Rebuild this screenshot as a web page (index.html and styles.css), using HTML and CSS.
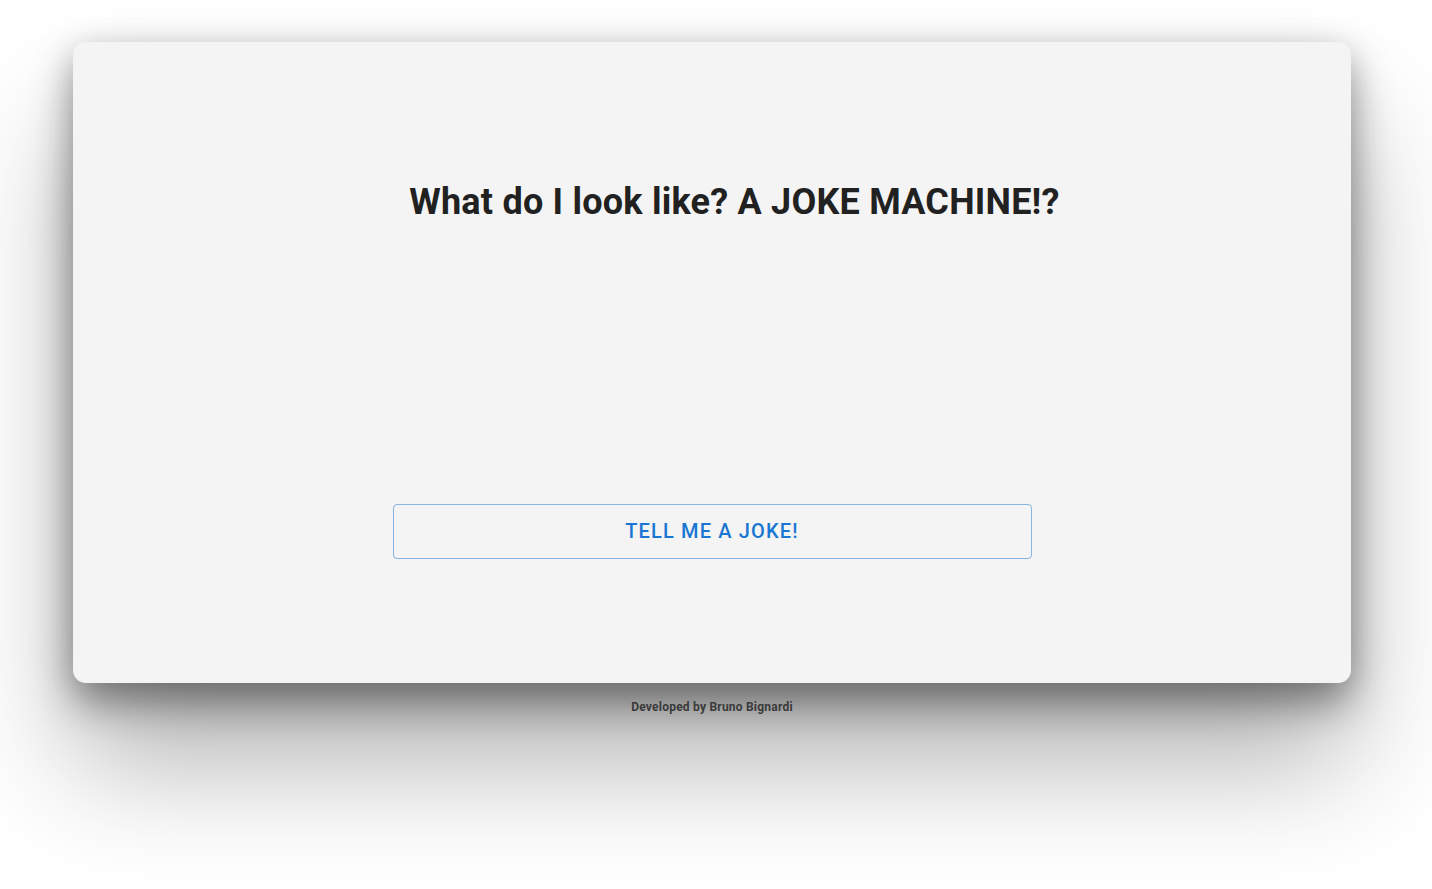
FILE: index.html
```html
<!DOCTYPE html>
<html lang="en">
<head>
<meta charset="utf-8">
<title>Joke Machine</title>
<link rel="stylesheet" href="styles.css">
</head>
<body>
<div class="page">
  <main class="card">
    <h1 class="title">What do I look like? A JOKE MACHINE!?</h1>
    <div class="joke"></div>
    <button class="joke-btn" type="button">TELL ME A JOKE!</button>
  </main>
  <footer class="credit">Developed by Bruno Bignardi</footer>
</div>
</body>
</html>
```

FILE: styles.css
```css
html, body {
  margin: 0;
  padding: 0;
  background: #ffffff;
  font-family: Roboto, "Noto Sans", Arial, sans-serif;
}

.page {
  min-height: 100vh;
  box-sizing: border-box;
  padding: 42px 81px 0 73px;
  display: flex;
  flex-direction: column;
  align-items: stretch;
}

.card {
  height: 641px;
  flex-shrink: 0;
  box-sizing: border-box;
  background: #f4f4f4;
  border-radius: 13px;
  box-shadow: 0 20px 40px rgba(0, 0, 0, 0.4),
              0 80px 120px rgba(0, 0, 0, 0.3),
              0 0 30px rgba(0, 0, 0, 0.08);
  display: flex;
  flex-direction: column;
  align-items: center;
  padding-top: 139px;
}

.title {
  margin: 0;
  padding-left: 45px;
  font-size: 36px;
  line-height: 42px;
  font-weight: 700;
  letter-spacing: 0.22px;
  color: #212121;
}

.joke {
  height: 281px;
}

.joke-btn {
  width: 639px;
  height: 55px;
  background: transparent;
  border: 1px solid rgba(25, 118, 210, 0.5);
  border-radius: 4px;
  color: #1976d2;
  font-family: Roboto, "Noto Sans", Arial, sans-serif;
  font-size: 20px;
  font-weight: 500;
  letter-spacing: 1.15px;
  display: flex;
  align-items: center;
  justify-content: center;
  padding: 0 0 2px 0;
  cursor: pointer;
}

.credit {
  margin-top: 17px;
  text-align: center;
  font-size: 12px;
  line-height: 14px;
  font-weight: 700;
  letter-spacing: 0.22px;
  color: #3a3a3a;
}
```
